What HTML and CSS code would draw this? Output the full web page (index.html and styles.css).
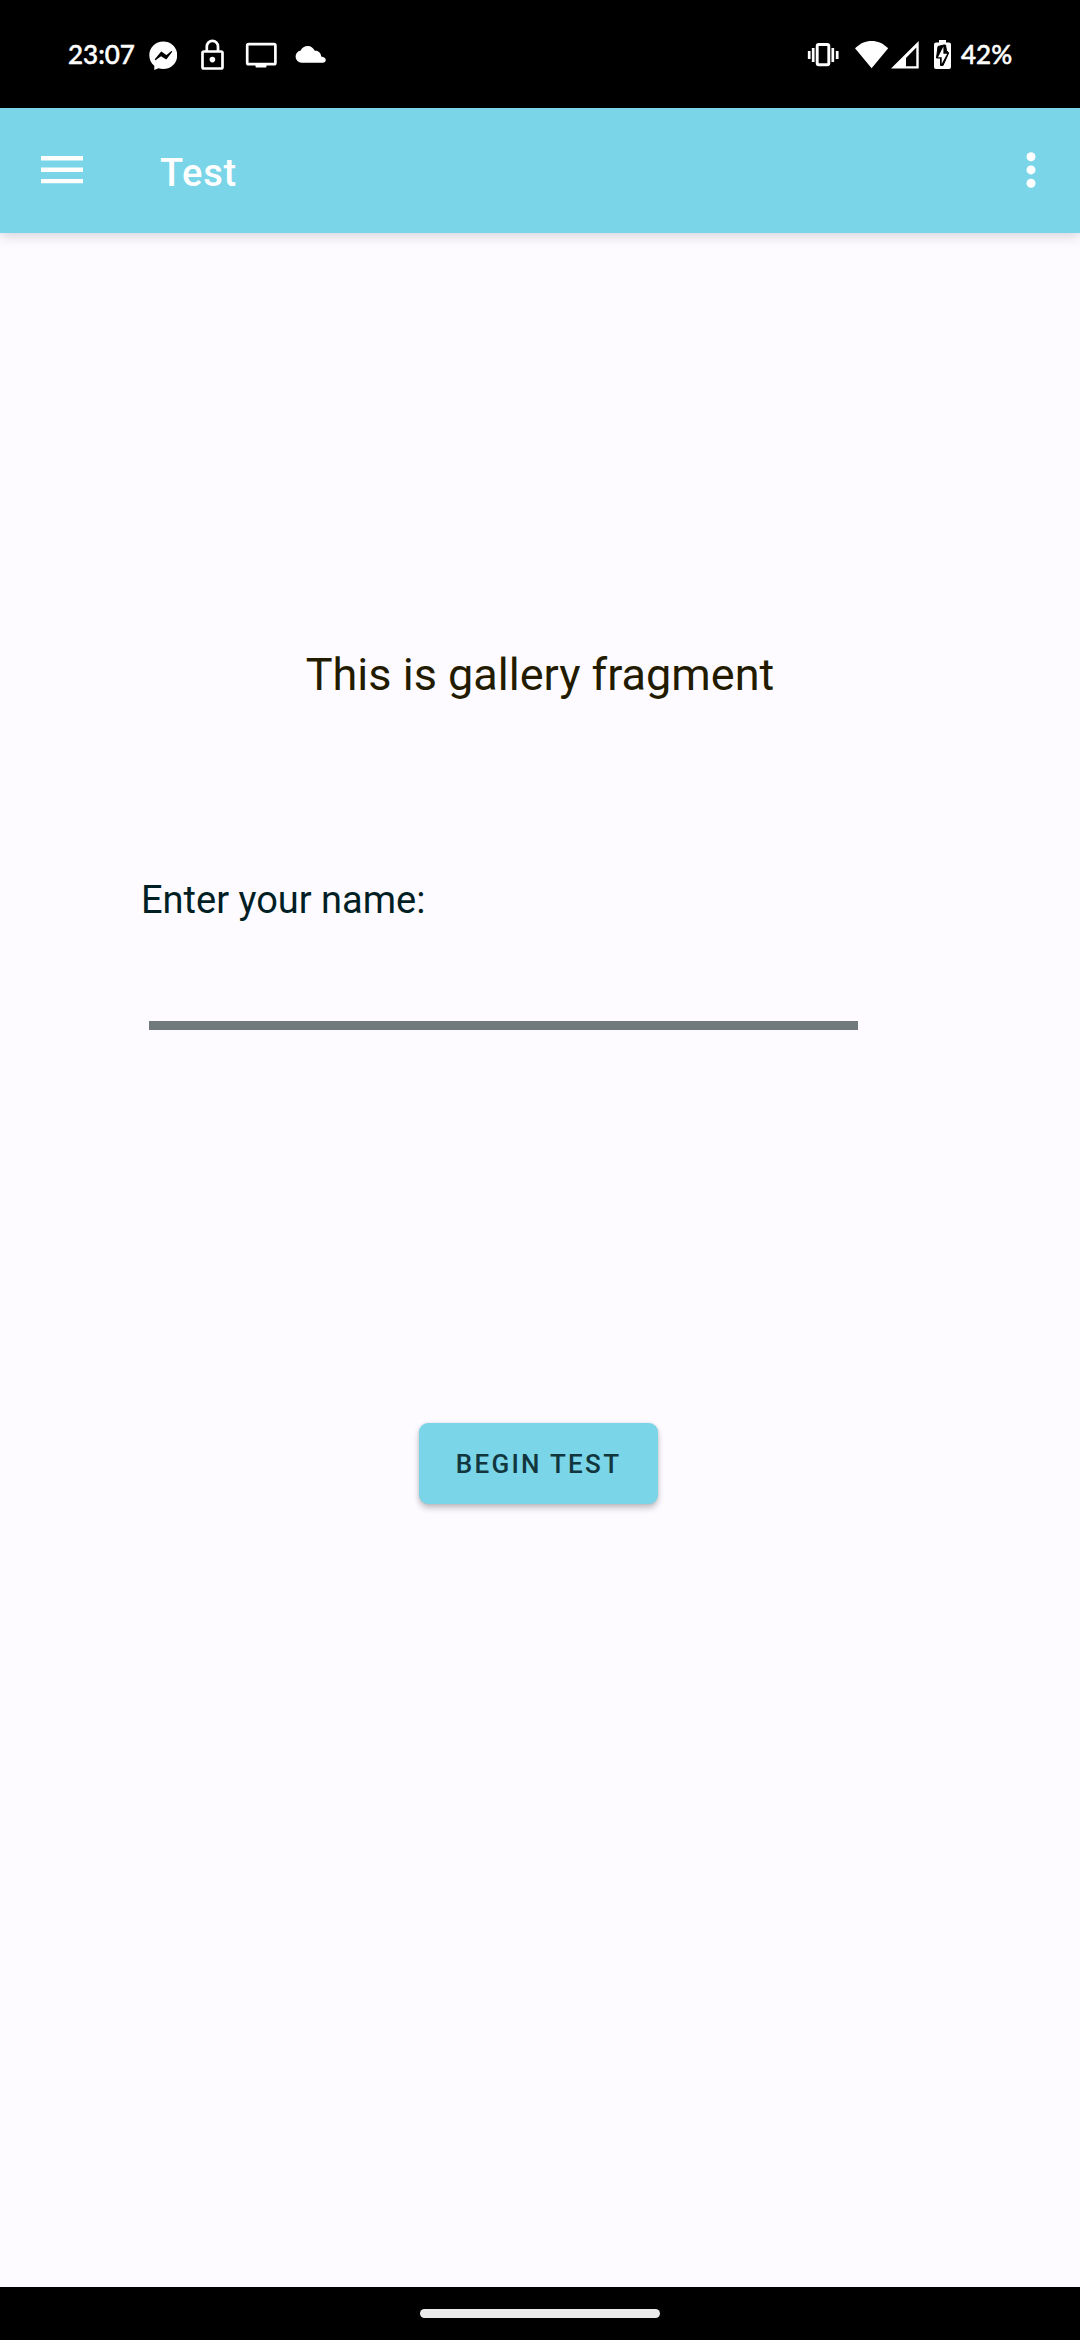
FILE: index.html
```html
<!DOCTYPE html>
<html lang="en">
<head>
<meta charset="utf-8">
<title>Test</title>
<link rel="stylesheet" href="styles.css">
</head>
<body>
<div class="screen">
  <header class="status-bar">
    <div class="status-left">
      <span class="clock">23:07</span>
      <svg class="icon messenger" width="28" height="36" viewBox="149 38 28 36"><path fill="#fff" d="M163.300 41.500C155.500 41.500 149.300 47.300 149.300 55.200C149.300 59.500 151.200 63.200 154.300 65.700V70L158.500 68.200C160 68.700 161.600 68.900 163.300 68.900C171.100 68.900 177.200 63.100 177.200 55.200S171.100 41.500 163.300 41.500Z"/><path d="M155.500 59.500L161.300 52.300L166.300 55.900L171.500 51.700L166.200 58.600L161 55.500Z" fill="#000" stroke="#000" stroke-width="1.300" stroke-linejoin="round"/></svg>
      <svg class="icon lock" width="24" height="36" viewBox="200 38 24 36"><rect x="202.500" y="51.500" width="20" height="17" rx="1.500" fill="none" stroke="#fff" stroke-width="2.700"/><path d="M206.800 51V46.500a5.600 5.600 0 0 1 11.200 0V51" fill="none" stroke="#fff" stroke-width="2.700"/><circle cx="212.400" cy="59.600" r="2.800" fill="#fff"/></svg>
      <svg class="icon monitor" width="32" height="36" viewBox="245 38 32 36"><rect x="247.200" y="44.200" width="28.200" height="20" rx="1.500" fill="none" stroke="#fff" stroke-width="2.700"/><path d="M255.500 64h11v2.500q0 1-1 1h-9q-1 0-1-1z" fill="#fff"/></svg>
      <svg class="icon cloud" width="32" height="36" viewBox="295 38 32 36"><path fill="#fff" d="M301.500 62.700a6.200 6.200 0 0 1-.8-12.300C302 47.600 304.500 45.900 307.800 45.900C311 45.900 313.600 48 314.800 50.800C318.400 50.400 321 53 321.200 56.400C324 56.700 325.800 58 325.800 60Q325.500 62.700 322.800 62.700Z"/></svg>
    </div>
    <div class="status-right">
      <svg class="icon vibrate" width="33" height="36" viewBox="807 38 33 36"><rect x="817.200" y="44.500" width="11.600" height="20.300" rx="1.500" fill="none" stroke="#fff" stroke-width="2.900"/><path d="M813.200 48v14M832.800 48v14M809.200 51v8M837.200 51v8" stroke="#fff" stroke-width="2.700"/></svg>
      <svg class="icon wifi" width="34" height="36" viewBox="855 38 34 36"><path fill="#fff" d="M855 48.300C864.500 38.500 878.700 38.500 888.200 48.300L871.600 68.300Z"/></svg>
      <svg class="icon signal" width="29" height="36" viewBox="890 38 29 36"><path fill="#fff" fill-rule="evenodd" d="M891 68.500L918.700 41V68.500ZM906 66.300H916.300V47.500L906 57.900Z"/></svg>
      <svg class="icon battery" width="18" height="36" viewBox="934 38 18 36"><path fill="#fff" d="M939 40h7v2.500h3q2 0 2 2V67q0 2-2 2H936q-2 0-2-2V44.500q0-2 2-2h3z"/><path d="M943.800 45L938 46.500L936.500 58H940.500V65.500H943L948.700 53L946.500 50.500L945.500 45Z" fill="#000" stroke="#000" stroke-width="1"/><path fill="#fff" d="M943.400 46.500L938 57.300H941.700V63.800L947.200 53.800H943.400Z"/></svg>
      <span class="level">42%</span>
    </div>
  </header>
  <nav class="app-bar">
    <svg class="menu" width="42" height="28" viewBox="0 0 42 28"><path fill="#fff" d="M0 0h42v4.600H0zM0 11.400h42V16H0zM0 22.900h42v4.400H0z"/></svg>
    <h1 class="title">Test</h1>
    <svg class="more" width="10" height="36" viewBox="0 0 10 36"><circle cx="5" cy="4.700" r="4.500" fill="#fff"/><circle cx="5" cy="17.900" r="4.500" fill="#fff"/><circle cx="5" cy="31.200" r="4.500" fill="#fff"/></svg>
  </nav>
  <main class="content">
    <p class="heading">This is gallery fragment</p>
    <label class="name-label" for="name">Enter your name:</label>
    <input class="name-input" id="name" type="text">
    <button class="begin" type="button">BEGIN TEST</button>
  </main>
  <footer class="nav-bar"><div class="pill"></div></footer>
</div>
</body>
</html>
```

FILE: styles.css
```css
* { box-sizing: border-box; }
body { margin: 0; font-family: Roboto, sans-serif; }
.screen {
  width: 1080px;
  height: 2340px;
  display: flex;
  flex-direction: column;
  background: #fdfbff;
}
.status-bar {
  height: 108px;
  flex: none;
  display: flex;
  justify-content: space-between;
  padding: 38px 68px 0;
  background: #000;
  color: #fff;
  font: 500 26px/32px Lato, sans-serif;
  -webkit-text-stroke: .5px #fff;
}
.status-left, .status-right { display: flex; }
.icon { display: block; flex: none; }
.clock { width: 81px; white-space: nowrap; }
.lock { margin-left: 23px; }
.monitor { margin-left: 21px; }
.cloud { margin-left: 18px; }
.wifi { margin-left: 15px; }
.signal { margin-left: 1px; }
.battery { margin-left: 15px; }
.level { width: 51px; margin-left: 9px; white-space: nowrap; }
.app-bar {
  height: 125px;
  flex: none;
  display: flex;
  align-items: flex-start;
  padding: 48px 44px 0 41px;
  background: #79d5e7;
  box-shadow: 0 3px 12px rgba(0, 0, 0, .16);
}
.title {
  margin: -5px auto 0 77px;
  color: #fff;
  font-size: 38px;
  line-height: 44px;
  font-weight: 500;
  letter-spacing: .7px;
}
.more { margin-top: -4px; }
.content {
  flex: 1;
  display: flex;
  flex-direction: column;
  align-items: flex-start;
}
.heading {
  margin: 415px 0 0;
  width: 100%;
  text-align: center;
  font-size: 45px;
  line-height: 53px;
  color: #231b00;
}
.name-label {
  margin: 177px 0 0 141px;
  font-size: 38px;
  line-height: 45px;
  color: #001f25;
}
.name-input {
  width: 709px;
  height: 80px;
  margin: 27px 0 0 149px;
  padding: 0;
  border: 0;
  border-bottom: 9px solid #70797b;
  background: transparent;
  font: 38px Roboto, sans-serif;
  outline: none;
}
.begin {
  width: 239px;
  height: 81px;
  margin: 393px 0 0 419px;
  padding: 0;
  border: 0;
  border-radius: 9px;
  background: #79d5e7;
  color: #12363e;
  font: 500 26px/30px Roboto, sans-serif;
  letter-spacing: 2.3px;
  box-shadow: 0 4px 6px rgba(0, 0, 0, .24), 0 0 3px rgba(0, 0, 0, .1);
}
.nav-bar {
  height: 53px;
  flex: none;
  display: flex;
  justify-content: center;
  padding-top: 21.500px;
  background: #000;
}
.pill { width: 240px; height: 9.500px; border-radius: 5px; background: #ebebeb; }
```
